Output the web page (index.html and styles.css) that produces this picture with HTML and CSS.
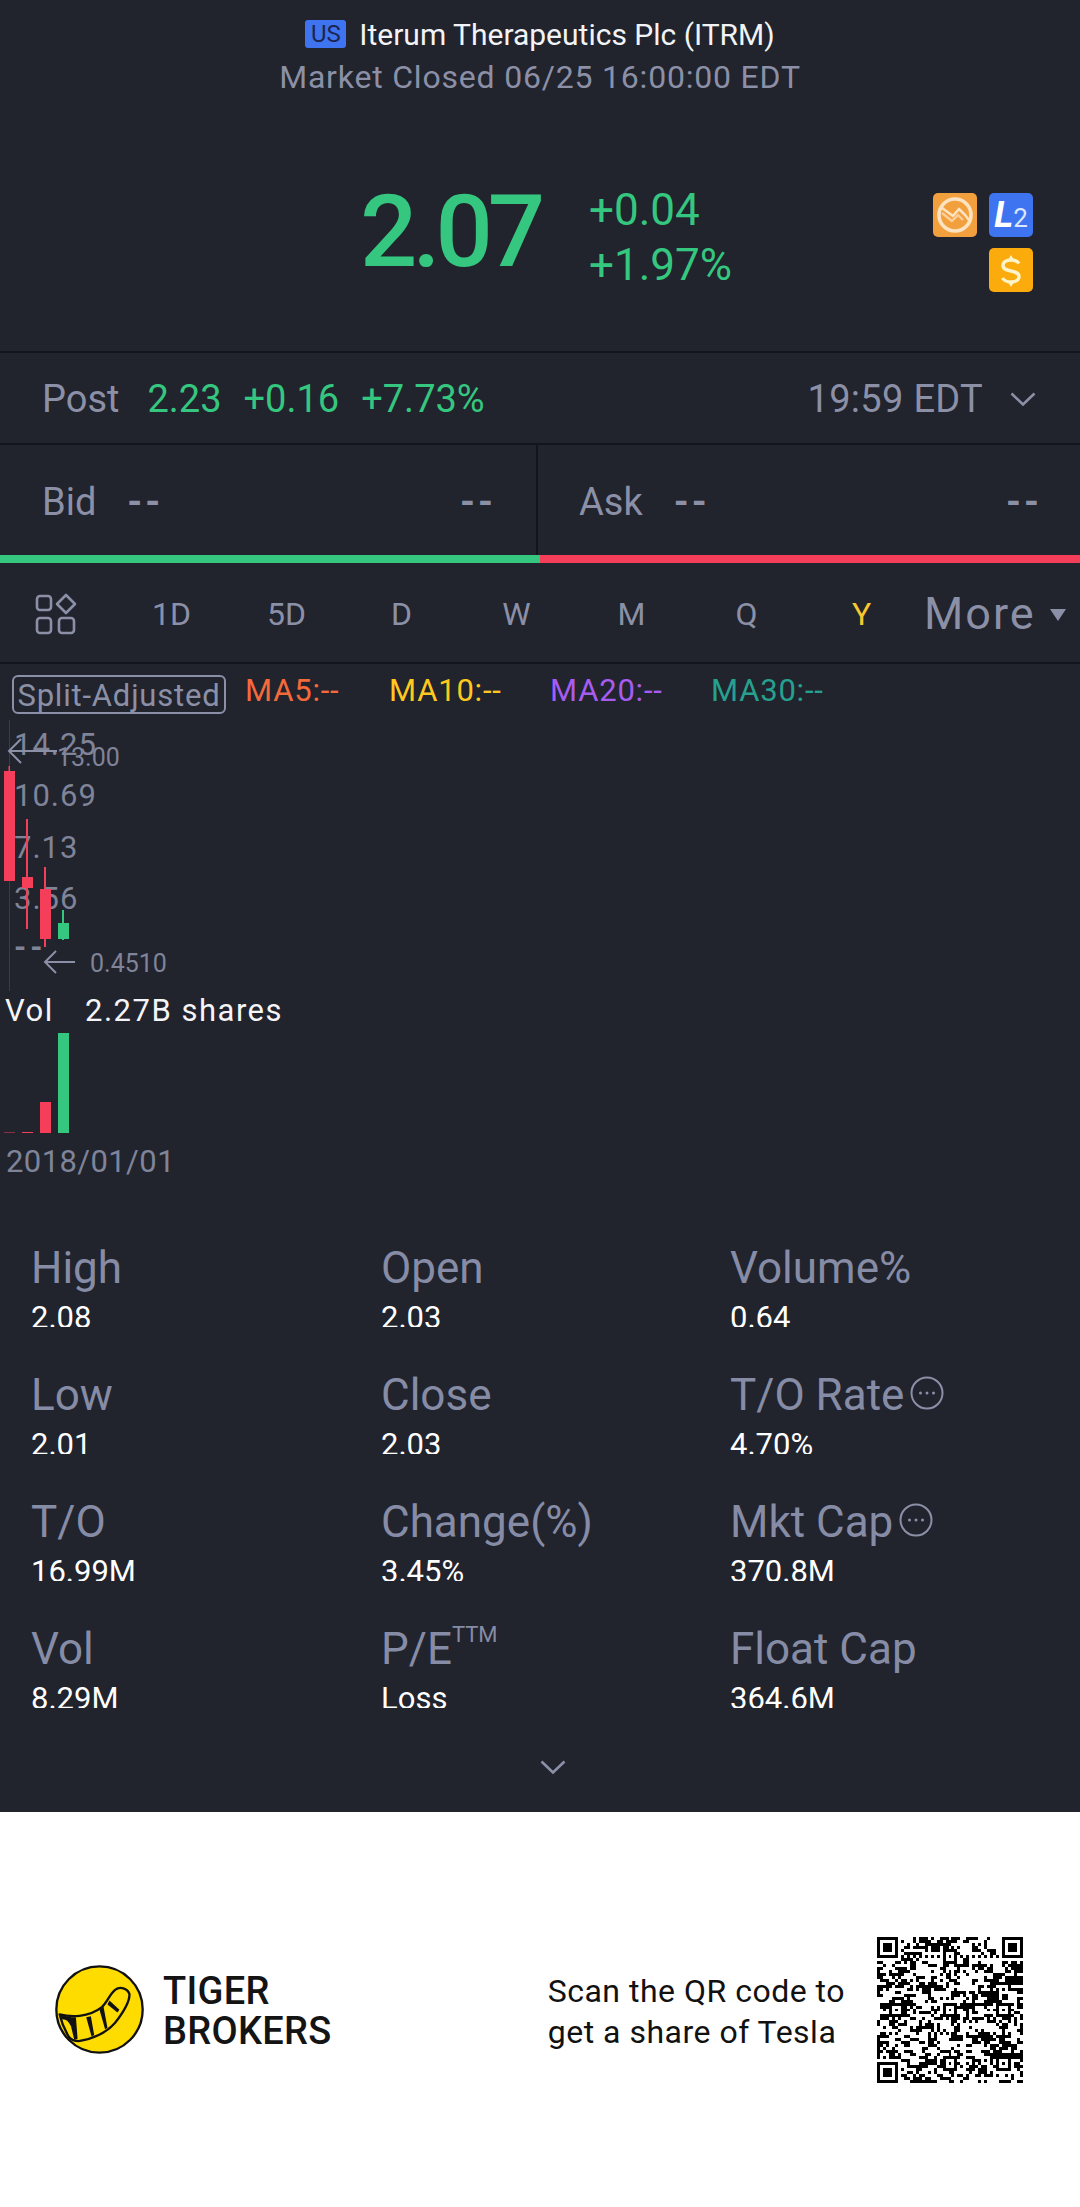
FILE: index.html
```html
<!DOCTYPE html>
<html lang="en">
<head>
<meta charset="utf-8">
<title>Iterum Therapeutics Plc (ITRM)</title>
<link rel="stylesheet" href="styles.css">
</head>
<body>
<main class="app">
  <header class="quote">
    <div class="title"><span class="market-tag">US</span><span>Iterum Therapeutics Plc (ITRM)</span></div>
    <div class="status">Market Closed 06/25 16:00:00 EDT</div>
    <div class="price-row">
      <div class="price">2.07</div>
      <div class="change"><div>+0.04</div><div>+1.97%</div></div>
      <div class="badges">
        <span class="badge badge-orange">
          <svg viewBox="0 0 44 44" width="44" height="44"><circle cx="22" cy="22" r="16" fill="none" stroke="#fde3c2" stroke-width="3.600"/><path d="M9 15 L20 23 L26 16 L32 22 L36 27" fill="none" stroke="#fde3c2" stroke-width="2.600" stroke-linejoin="round"/><path d="M9 20 L19 28 L25 22 L30 27" fill="none" stroke="#fbcf9c" stroke-width="2.400" stroke-linejoin="round"/></svg>
        </span>
        <span class="badge badge-blue"><i class="l-mark">L</i><span class="l-two">2</span></span>
        <span class="badge badge-gold">
          <svg viewBox="0 0 44 44" width="44" height="44"><path d="M30 15.500 C28.500 13 25.500 12 22 12 C17.500 12 14 14 14 17.500 C14 21 17.500 22 22 23 C26.500 24 30 25 30 28.500 C30 32 26.500 34 22 34 C18 34 15 32.500 13.500 30" fill="none" stroke="#fdf3c8" stroke-width="3.400"/><path d="M22 7 l3 5 h-6z M22 39 l3 -5 h-6z" fill="#fdf3c8"/></svg>
        </span>
      </div>
    </div>
  </header>

  <section class="post">
    <span class="post-label">Post</span>
    <span class="up">2.23</span>
    <span class="up">+0.16</span>
    <span class="up">+7.73%</span>
    <span class="post-time">19:59 EDT</span>
    <svg class="chev" viewBox="0 0 26 14" width="26" height="14"><path d="M1.500 1.500 L13 12.500 L24.500 1.500" fill="none" stroke="#8b90a7" stroke-width="2.600"/></svg>
  </section>

  <section class="book">
    <div class="book-side book-bid"><span class="book-label">Bid</span><span class="book-dash">--</span><span class="book-dash book-end">--</span></div>
    <div class="book-side book-ask"><span class="book-label">Ask</span><span class="book-dash">--</span><span class="book-dash book-end">--</span></div>
  </section>
  <div class="ratio"><div class="ratio-bid"></div><div class="ratio-ask"></div></div>

  <nav class="tabs">
    <div class="tab tab-icon">
      <svg viewBox="0 0 42 42" width="42" height="42"><g fill="none" stroke="#8b90a7" stroke-width="2.600"><rect x="2" y="3" width="14" height="14" rx="3"/><rect x="2" y="25" width="14" height="15" rx="3"/><rect x="24" y="25" width="15" height="15" rx="3"/><path d="M31 2 L40 11 L31 20 L22 11 Z" stroke-linejoin="round"/></g></svg>
    </div>
    <div class="tab">1D</div>
    <div class="tab">5D</div>
    <div class="tab">D</div>
    <div class="tab">W</div>
    <div class="tab">M</div>
    <div class="tab">Q</div>
    <div class="tab tab-active">Y</div>
    <div class="tab-more">More<span class="more-arrow"></span></div>
  </nav>

  <section class="indicators">
    <span class="split">Split-Adjusted</span>
    <span class="ma ma5">MA5:--</span>
    <span class="ma ma10">MA10:--</span>
    <span class="ma ma20">MA20:--</span>
    <span class="ma ma30">MA30:--</span>
  </section>

  <svg class="chart" viewBox="0 716 1080 474" width="1080" height="474">
    <line x1="9.500" y1="720" x2="9.500" y2="991" stroke="#3a3c48" stroke-width="1"/>
    <g class="axis">
      <text x="14" y="755">14.25</text>
      <text x="14" y="806">10.69</text>
      <text x="14" y="858">7.13</text>
      <text x="14" y="909">3.56</text>
      <text class="axis-dash" x="14" y="958">--</text>
    </g>
    <g fill="#f53e5a">
      <rect x="8.500" y="766" width="1.500" height="6"/>
      <rect x="4" y="771" width="11" height="110"/>
      <rect x="26" y="819" width="2" height="110"/>
      <rect x="22" y="877" width="11" height="11"/>
      <rect x="44" y="867" width="2" height="80"/>
      <rect x="40" y="889" width="11" height="50"/>
      <rect x="40" y="1102" width="11" height="31"/>
      <rect x="22" y="1132" width="11" height="1"/>
      <rect x="4" y="1132" width="11" height="1" opacity="0.500"/>
    </g>
    <g fill="#35c77f">
      <rect x="62" y="910" width="2" height="30"/>
      <rect x="58" y="923" width="11" height="16"/>
      <rect x="58" y="1033" width="11" height="100"/>
    </g>
    <g class="marker">
      <path d="M57 751 H10 M21 739 L9 751 L21 763" fill="none" stroke="#8b90a7" stroke-width="2"/>
      <text x="57" y="766">13.00</text>
      <path d="M75 962 H45 M56 951 L45 962 L56 973" fill="none" stroke="#8b90a7" stroke-width="2"/>
      <text x="90" y="972">0.4510</text>
    </g>
    <text class="vol" x="5" y="1021">Vol</text>
    <text class="vol" x="85" y="1021">2.27B shares</text>
    <text class="date" x="6" y="1172">2018/01/01</text>
  </svg>

  <section class="stats">
    <div class="stat"><div class="stat-label">High</div><div class="stat-value">2.08</div></div>
    <div class="stat"><div class="stat-label">Open</div><div class="stat-value">2.03</div></div>
    <div class="stat"><div class="stat-label">Volume%</div><div class="stat-value">0.64</div></div>
    <div class="stat"><div class="stat-label">Low</div><div class="stat-value">2.01</div></div>
    <div class="stat"><div class="stat-label">Close</div><div class="stat-value">2.03</div></div>
    <div class="stat"><div class="stat-label">T/O Rate<svg class="more-dot" viewBox="0 0 34 34" width="34" height="34"><circle cx="17" cy="17" r="15.500" fill="none" stroke="#8b90a7" stroke-width="2"/><circle cx="10.500" cy="17" r="1.500" fill="#8b90a7"/><circle cx="17" cy="17" r="1.500" fill="#8b90a7"/><circle cx="23.500" cy="17" r="1.500" fill="#8b90a7"/></svg></div><div class="stat-value">4.70%</div></div>
    <div class="stat"><div class="stat-label">T/O</div><div class="stat-value">16.99M</div></div>
    <div class="stat"><div class="stat-label">Change(%)</div><div class="stat-value">3.45%</div></div>
    <div class="stat"><div class="stat-label">Mkt Cap<svg class="more-dot" viewBox="0 0 34 34" width="34" height="34"><circle cx="17" cy="17" r="15.500" fill="none" stroke="#8b90a7" stroke-width="2"/><circle cx="10.500" cy="17" r="1.500" fill="#8b90a7"/><circle cx="17" cy="17" r="1.500" fill="#8b90a7"/><circle cx="23.500" cy="17" r="1.500" fill="#8b90a7"/></svg></div><div class="stat-value">370.8M</div></div>
    <div class="stat"><div class="stat-label">Vol</div><div class="stat-value">8.29M</div></div>
    <div class="stat"><div class="stat-label">P/E<sup class="ttm">TTM</sup></div><div class="stat-value">Loss</div></div>
    <div class="stat"><div class="stat-label">Float Cap</div><div class="stat-value">364.6M</div></div>
  </section>
  <div class="expand">
    <svg viewBox="0 0 26 14" width="26" height="14"><path d="M1.500 1.500 L13 12.500 L24.500 1.500" fill="none" stroke="#8b90a7" stroke-width="2.600"/></svg>
  </div>

  <footer class="promo">
    <div class="brand">
      <svg class="logo" viewBox="14 11 268 268" width="89" height="89">
        <circle cx="148" cy="145" r="130" fill="#ffdc00" stroke="#111" stroke-width="7"/>
        <path d="M28 160 C60 168 115 170 155 138 C172 122 178 100 195 86 C210 74 232 82 238 98 C240 120 222 150 195 185 C170 215 125 235 85 240 C72 240 62 236 56 228 C44 208 34 185 28 160 Z" fill="#ffdc00" stroke="#111" stroke-width="7" stroke-linejoin="round"/>
        <path d="M28 160 C40 164 52 166 64 168 L77 168 L82 233 L72 236 L62 195 C54 180 50 175 36 174 Z" fill="#111"/>
        <path d="M108 168 L122 165 L132 222 L124 226 Z M148 146 L160 136 L172 200 L165 205 Z M172 130 L178 118 L208 146 L202 154 Z" fill="#111"/>
      </svg>
      <div class="brand-name"><div>TIGER</div><div>BROKERS</div></div>
    </div>
    <div class="scan">
      <div class="scan-text"><div>Scan the QR code to</div><div>get a share of Tesla</div></div>
      <svg id="qr" class="qr" viewBox="0 0 49 49" width="146" height="146" shape-rendering="crispEdges"></svg>
    </div>
  </footer>
</main>
<script src="qr.js"></script>
</body>
</html>
```

FILE: styles.css
```css
* { box-sizing: border-box; }
html, body { margin: 0; padding: 0; background: #21232d; }
body { font-family: Roboto, "Noto Sans", sans-serif; color: #8b90a7; }
.app { width: 1080px; height: 2207px; display: flex; flex-direction: column; overflow: hidden; }

.quote { height: 353px; border-bottom: 2px solid #14151c; padding-top: 16px; }
.title { display: flex; justify-content: center; align-items: center; gap: 13px; height: 36px; font-size: 30px; color: #f2f3f6; }
.market-tag { width: 41px; height: 28px; border-radius: 3px; background: #3f74f0; color: #1c2650; font-size: 24px; line-height: 28px; text-align: center; }
.status { text-align: center; font-size: 32px; line-height: 40px; letter-spacing: 0.8px; margin-top: 5px; }
.price-row { position: relative; display: flex; margin-top: 75px; padding-left: 360px; align-items: center; height: 120px; }
.price { font-size: 101px; line-height: 120px; letter-spacing: -5px; color: #35c77f; width: 229px; font-weight: 500; }
.change { font-size: 44px; line-height: 55px; color: #35c77f; padding-top: 11px; }
.badges { position: absolute; left: 933px; top: 21px; width: 100px; display: grid; grid-template-columns: 44px 44px; gap: 11px 12px; }
.badge { width: 44px; height: 44px; border-radius: 5px; display: flex; align-items: center; justify-content: center; overflow: hidden; }
.badge-orange { background: #f2a03d; }
.badge-blue { background: #3f74f0; color: #fff; align-items: baseline; padding-top: 2px; }
.badge-gold { background: #fbab0c; grid-column: 2; }
.l-mark { font-size: 36px; line-height: 40px; font-weight: 700; }
.l-two { font-size: 26px; line-height: 40px; color: #dbe6ff; }

.post { height: 92px; border-bottom: 2px solid #14151c; display: flex; align-items: center; padding: 2px 44px 0 42px; font-size: 38px; gap: 22px; }
.post-label { margin-right: 6px; }
.up { color: #35c77f; }
.post-time { margin-left: auto; letter-spacing: 0.3px; }
.chev { margin-left: 5px; }

.book { height: 110px; display: flex; font-size: 38px; }
.book-side { display: flex; align-items: center; padding-top: 4px; }
.book-bid { width: 538px; padding-left: 42px; padding-right: 40px; border-right: 2px solid #14151c; }
.book-ask { width: 542px; padding-left: 41px; padding-right: 38px; }
.book-label { margin-right: 31px; }
.book-dash { font-weight: 700; letter-spacing: 3px; }
.book-end { margin-left: auto; }
.ratio { height: 8px; display: flex; }
.ratio-bid { width: 540px; background: #35c77f; }
.ratio-ask { flex: 1; background: #f53e5a; }

.tabs { height: 101px; border-bottom: 2px solid #14151c; display: flex; align-items: center; font-size: 32px; padding-top: 2px; }
.tab { width: 115px; text-align: center; display: flex; justify-content: center; }
.tab-icon { width: 114px; padding-right: 3px; }
.tab-active { color: #f7c82e; }
.tab-more { font-size: 45px; letter-spacing: 2px; margin-left: 5px; display: flex; align-items: center; }
.more-arrow { width: 0; height: 0; border-left: 8px solid transparent; border-right: 8px solid transparent; border-top: 12px solid #8b90a7; margin-left: 14px; margin-top: 2px; }

.indicators { height: 52px; display: flex; align-items: flex-start; font-size: 31px; padding-top: 11px; }
.split { margin-left: 12px; width: 214px; height: 39px; border: 2px solid #8b90a7; border-radius: 6px; line-height: 38px; text-align: center; white-space: nowrap; letter-spacing: 0.8px; }
.ma { line-height: 31px; white-space: nowrap; letter-spacing: 0.8px; }
.ma5 { margin-left: 19px; width: 144px; color: #f5693a; }
.ma10 { width: 161px; color: #ffc81e; }
.ma20 { width: 161px; color: #a75cf0; }
.ma30 { color: #26a08f; }

.chart { display: block; flex: none; }
.axis text { font-family: Roboto, sans-serif; font-size: 31px; fill: #7f8499; letter-spacing: 1px; }
.axis .axis-dash { letter-spacing: 4px; font-weight: 700; }
.date { font-family: Roboto, sans-serif; font-size: 31px; fill: #7f8499; letter-spacing: 0.4px; }
.marker text { font-family: Roboto, sans-serif; font-size: 25px; fill: #7f8499; }
.vol { font-family: Roboto, sans-serif; font-size: 31px; fill: #f5f5f7; letter-spacing: 1.5px; }

.stats { height: 559px; flex: none; padding: 51px 0 0 31px; display: grid; grid-template-columns: 350px 349px 350px; grid-auto-rows: 127px; align-content: start; }
.stat-label { font-size: 44px; line-height: 54px; white-space: nowrap; display: flex; color: #868ca5; }
.stat-value { font-size: 31px; line-height: 45px; height: 32px; color: #fff; overflow: hidden; }
.more-dot { margin-left: 6px; margin-top: 8px; }
.ttm { font-size: 22px; line-height: 26px; margin: 0; }
.expand { height: 63px; flex: none; display: flex; justify-content: center; padding-left: 26px; }
.expand svg { margin-top: 11px; }

.promo { flex: 1; background: #fff; display: flex; align-items: center; justify-content: space-between; padding: 0 57px 0 55px; color: #111; }
.brand { display: flex; align-items: center; gap: 19px; }
.logo { flex: none; }
.brand-name { font-size: 38px; line-height: 40px; font-weight: 500; color: #141414; letter-spacing: 0.3px; padding-top: 2px; }
.scan { display: flex; align-items: center; gap: 32px; }
.scan-text { font-size: 32px; line-height: 41px; letter-spacing: 0.5px; color: #111; padding-top: 4px; }
.qr { flex: none; }
```

FILE: qr.js
```js
(function () {
  var n = 49, grid = [], i, x, y, seed = 20210625;
  function rnd() { seed = (seed * 1103515245 + 12345) & 0x7fffffff; return (seed >> 12) % 1000 / 1000; }
  for (y = 0; y < n; y++) {
    grid.push([]);
    for (x = 0; x < n; x++) {
      var left = x ? grid[y][x - 1] : 0, up = y ? grid[y - 1][x] : 0;
      grid[y].push(rnd() < 0.32 + 0.18 * left + 0.1 * up ? 1 : 0);
    }
  }
  function finder(cx, cy) {
    for (y = -1; y < 8; y++) for (x = -1; x < 8; x++) {
      var gx = cx + x, gy = cy + y;
      if (gx < 0 || gy < 0 || gx >= n || gy >= n) continue;
      var ring = x >= 0 && x <= 6 && y >= 0 && y <= 6 && (x === 0 || x === 6 || y === 0 || y === 6);
      var core = x >= 2 && x <= 4 && y >= 2 && y <= 4;
      grid[gy][gx] = ring || core ? 1 : 0;
    }
  }
  function align(cx, cy) {
    for (y = -2; y <= 2; y++) for (x = -2; x <= 2; x++) {
      grid[cy + y][cx + x] = Math.max(Math.abs(x), Math.abs(y)) === 1 ? 0 : 1;
    }
  }
  finder(0, 0); finder(42, 0); finder(0, 42);
  [[24, 6], [6, 24], [24, 24], [42, 24], [24, 42], [42, 42]].forEach(function (p) { align(p[0], p[1]); });
  for (i = 8; i < 41; i++) { if (i < 22 || i > 26) { grid[6][i] = (i + 1) % 2; grid[i][6] = (i + 1) % 2; } }
  var d = "";
  for (y = 0; y < n; y++) for (x = 0; x < n; x++) {
    if (grid[y][x]) { var s = x; while (x + 1 < n && grid[y][x + 1]) x++; d += "M" + s + " " + y + "h" + (x - s + 1) + "v1h-" + (x - s + 1) + "z"; }
  }
  var path = document.createElementNS("http://www.w3.org/2000/svg", "path");
  path.setAttribute("d", d);
  path.setAttribute("fill", "#000");
  document.getElementById("qr").appendChild(path);
})();
```
